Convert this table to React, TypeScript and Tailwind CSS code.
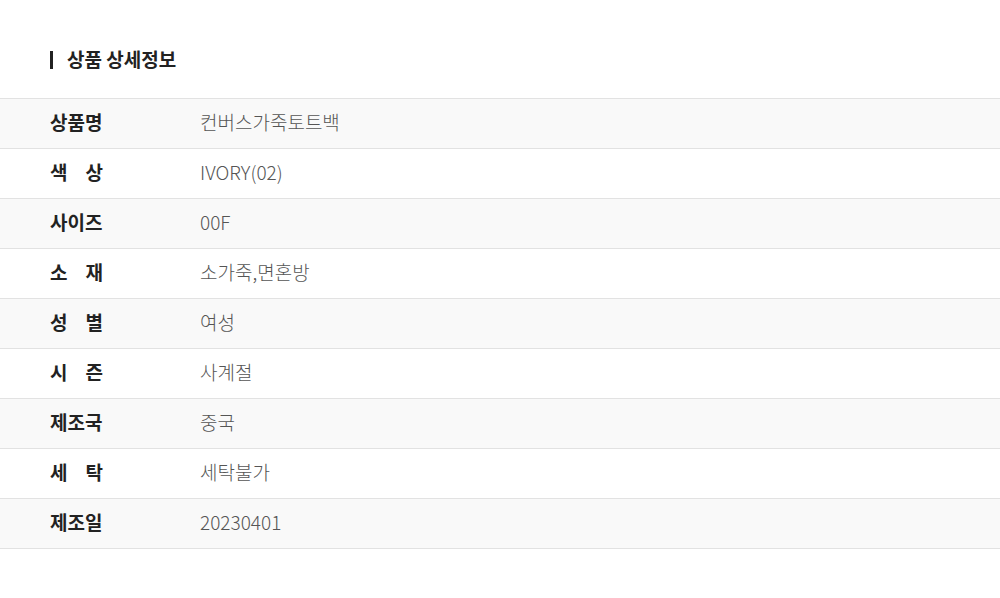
import React from "react";

const rows: [string, string][] = [
  ["상품명", "컨버스가죽토트백"],
  ["색상", "IVORY(02)"],
  ["사이즈", "00F"],
  ["소재", "소가죽,면혼방"],
  ["성별", "여성"],
  ["시즌", "사계절"],
  ["제조국", "중국"],
  ["세탁", "세탁불가"],
  ["제조일", "20230401"],
];

export default function App() {
  return (
    <div
      className="w-[1000px] h-[598px] bg-white"
      style={{ fontFamily: '"Noto Sans CJK KR", "Noto Sans", sans-serif' }}
    >
      <div className="pt-[48px] pl-[50px] flex items-center h-[72px]">
        <span className="w-[3px] h-[18px] bg-[#222] mr-[14px]" />
        <h2 className="text-[19px] font-bold text-[#222] leading-[24px] pb-[2px]">
          상품 상세정보
        </h2>
      </div>
      <div className="mt-[26px] border-t border-[#e2e2e2]">
        {rows.map(([k, v], i) => (
          <div
            key={k}
            className={`flex items-center h-[50px] border-b border-[#e2e2e2] pb-[3px] ${
              i % 2 === 0 ? "bg-[#f9f9f9]" : "bg-white"
            }`}
          >
            <div className="w-[200px] shrink-0 pl-[50px]">
              {k.length === 2 ? (
                <div className="flex justify-between w-[53px] text-[19px] font-bold text-[#222] leading-[24px]">
                  <span>{k[0]}</span>
                  <span>{k[1]}</span>
                </div>
              ) : (
                <div className="text-[19px] font-bold text-[#222] leading-[24px]">
                  {k}
                </div>
              )}
            </div>
            <div className="text-[19px] font-light text-[#555] leading-[24px]">
              {v}
            </div>
          </div>
        ))}
      </div>
    </div>
  );
}
